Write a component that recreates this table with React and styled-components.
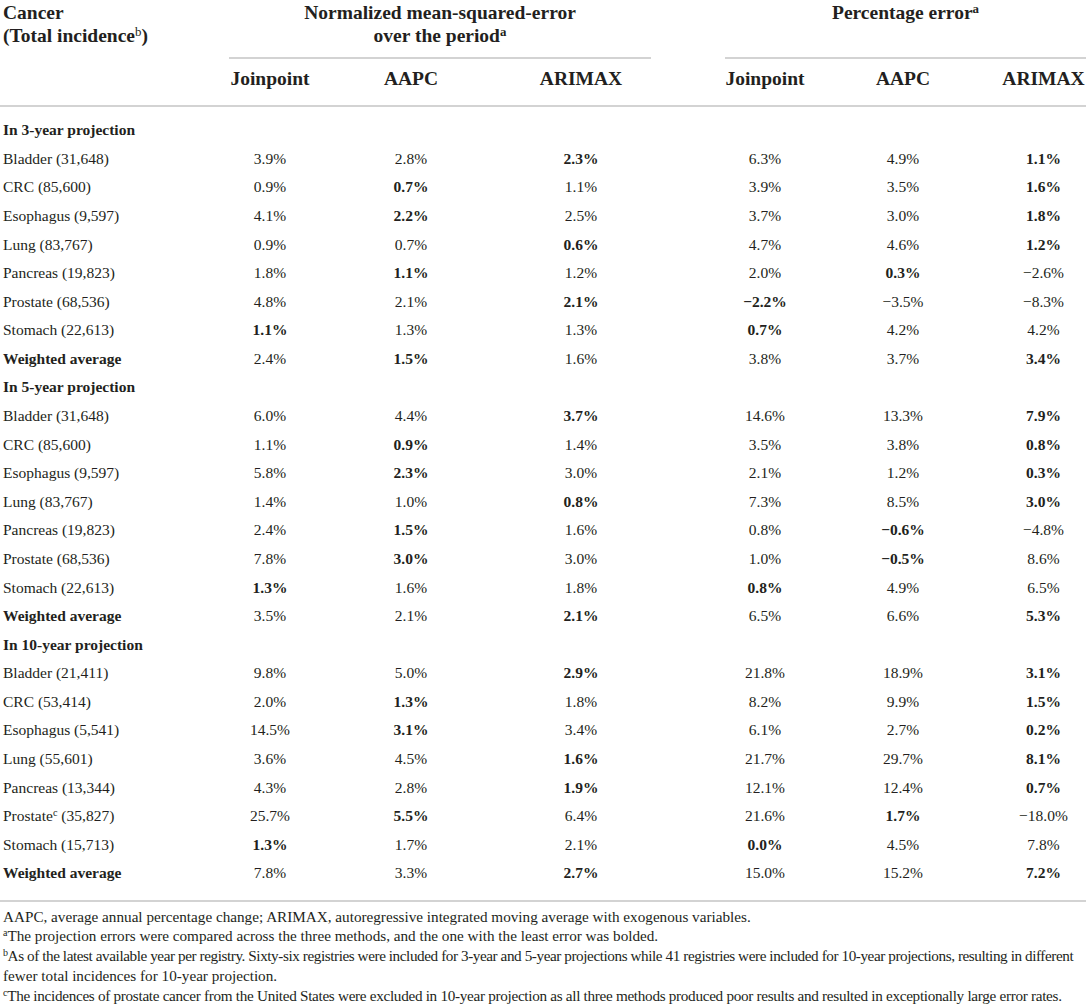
import styled, { createGlobalStyle } from 'styled-components';

const COLS = '229px 82px 200px 140px 74px 80px 196px 85px';
const RULE = '2px solid #d3d3d3';

const GlobalStyle = createGlobalStyle`
  html, body {
    margin: 0;
    padding: 0;
    background: #ffffff;
  }
  body {
    font-family: "Liberation Serif", "Times New Roman", serif;
    color: #231f20;
  }
`;

const Wrap = styled.div`
  width: 1086px;
`;

const Head = styled.div`
  display: grid;
  grid-template-columns: ${COLS};
  grid-template-rows: 59px 48px;
  font-weight: 700;
  font-size: 19.5px;
`;

const CornerCell = styled.div`
  grid-column: 1;
  grid-row: 1 / span 2;
  border-bottom: ${RULE};
  line-height: 23px;
  padding: 1px 0 0 3px;
`;

const GroupCell = styled.div`
  grid-row: 1;
  grid-column: ${({ $start }) => $start} / span 3;
  border-bottom: ${RULE};
  text-align: center;
  line-height: 23px;
  padding-top: 1px;
`;

const ColHead = styled.div`
  grid-row: 2;
  display: flex;
  align-items: center;
  justify-content: center;
  padding-bottom: 6px;
  border-bottom: ${RULE};
  white-space: nowrap;
`;

const Sup = styled.sup`
  font-size: 0.66em;
  line-height: 0;
  vertical-align: 0.5em;
  font-weight: ${({ $bold }) => ($bold ? 700 : 400)};
`;

const Body = styled.div`
  padding: 9px 0 12px;
  border-bottom: ${RULE};
`;

const Row = styled.div`
  display: grid;
  grid-template-columns: ${COLS};
  height: 28.58px;
  align-items: center;
  font-size: 15.5px;
`;

const Label = styled.div`
  padding-left: 3px;
  white-space: nowrap;
  font-weight: ${({ $bold }) => ($bold ? 700 : 400)};
`;

const Value = styled.div`
  text-align: center;
  white-space: nowrap;
  font-weight: ${({ $bold }) => ($bold ? 700 : 400)};
`;

const Notes = styled.div`
  padding: 5px 0 0 3px;
  font-size: 15.2px;
  line-height: 19.75px;
`;

const Note = styled.div`
  white-space: nowrap;
  letter-spacing: ${({ $spacing = 0 }) => $spacing}px;
`;

const sections = [
  {
    title: 'In 3-year projection',
    rows: [
      ['Bladder (31,648)', '3.9%', '2.8%', '*2.3%', '6.3%', '4.9%', '*1.1%'],
      ['CRC (85,600)', '0.9%', '*0.7%', '1.1%', '3.9%', '3.5%', '*1.6%'],
      ['Esophagus (9,597)', '4.1%', '*2.2%', '2.5%', '3.7%', '3.0%', '*1.8%'],
      ['Lung (83,767)', '0.9%', '0.7%', '*0.6%', '4.7%', '4.6%', '*1.2%'],
      ['Pancreas (19,823)', '1.8%', '*1.1%', '1.2%', '2.0%', '*0.3%', '\u22122.6%'],
      ['Prostate (68,536)', '4.8%', '2.1%', '*2.1%', '*\u22122.2%', '\u22123.5%', '\u22128.3%'],
      ['Stomach (22,613)', '*1.1%', '1.3%', '1.3%', '*0.7%', '4.2%', '4.2%'],
      ['*Weighted average', '2.4%', '*1.5%', '1.6%', '3.8%', '3.7%', '*3.4%'],
    ],
  },
  {
    title: 'In 5-year projection',
    rows: [
      ['Bladder (31,648)', '6.0%', '4.4%', '*3.7%', '14.6%', '13.3%', '*7.9%'],
      ['CRC (85,600)', '1.1%', '*0.9%', '1.4%', '3.5%', '3.8%', '*0.8%'],
      ['Esophagus (9,597)', '5.8%', '*2.3%', '3.0%', '2.1%', '1.2%', '*0.3%'],
      ['Lung (83,767)', '1.4%', '1.0%', '*0.8%', '7.3%', '8.5%', '*3.0%'],
      ['Pancreas (19,823)', '2.4%', '*1.5%', '1.6%', '0.8%', '*\u22120.6%', '\u22124.8%'],
      ['Prostate (68,536)', '7.8%', '*3.0%', '3.0%', '1.0%', '*\u22120.5%', '8.6%'],
      ['Stomach (22,613)', '*1.3%', '1.6%', '1.8%', '*0.8%', '4.9%', '6.5%'],
      ['*Weighted average', '3.5%', '2.1%', '*2.1%', '6.5%', '6.6%', '*5.3%'],
    ],
  },
  {
    title: 'In 10-year projection',
    rows: [
      ['Bladder (21,411)', '9.8%', '5.0%', '*2.9%', '21.8%', '18.9%', '*3.1%'],
      ['CRC (53,414)', '2.0%', '*1.3%', '1.8%', '8.2%', '9.9%', '*1.5%'],
      ['Esophagus (5,541)', '14.5%', '*3.1%', '3.4%', '6.1%', '2.7%', '*0.2%'],
      ['Lung (55,601)', '3.6%', '4.5%', '*1.6%', '21.7%', '29.7%', '*8.1%'],
      ['Pancreas (13,344)', '4.3%', '2.8%', '*1.9%', '12.1%', '12.4%', '*0.7%'],
      ['Prostate^c (35,827)', '25.7%', '*5.5%', '6.4%', '21.6%', '*1.7%', '\u221218.0%'],
      ['Stomach (15,713)', '*1.3%', '1.7%', '2.1%', '*0.0%', '4.5%', '7.8%'],
      ['*Weighted average', '7.8%', '3.3%', '*2.7%', '15.0%', '15.2%', '*7.2%'],
    ],
  },
];

const parse = (s) => (s.startsWith('*') ? [s.slice(1), true] : [s, false]);

function LabelText({ text }) {
  const [t, bold] = parse(text);
  if (t.includes('^c')) {
    const [a, b] = t.split('^c');
    return (
      <Label $bold={bold}>
        {a}
        <Sup>c</Sup>
        {b}
      </Label>
    );
  }
  return <Label $bold={bold}>{t}</Label>;
}

function DataRow({ cells }) {
  const [label, ...vals] = cells;
  return (
    <Row>
      <LabelText text={label} />
      {vals.slice(0, 3).map((v, i) => {
        const [t, b] = parse(v);
        return <Value key={i} $bold={b}>{t}</Value>;
      })}
      <div />
      {vals.slice(3).map((v, i) => {
        const [t, b] = parse(v);
        return <Value key={i + 3} $bold={b}>{t}</Value>;
      })}
    </Row>
  );
}

export default function App() {
  const methods = ['Joinpoint', 'AAPC', 'ARIMAX'];
  return (
    <Wrap>
      <GlobalStyle />
      <Head>
        <CornerCell>
          Cancer
          <br />
          (Total incidence<Sup>b</Sup>)
        </CornerCell>
        <GroupCell $start={2}>
          Normalized mean-squared-error
          <br />
          over the period<Sup $bold>a</Sup>
        </GroupCell>
        <GroupCell $start={6}>
          Percentage error<Sup $bold>a</Sup>
        </GroupCell>
        {methods.map((m) => (
          <ColHead key={'n' + m}>{m}</ColHead>
        ))}
        <ColHead />
        {methods.map((m) => (
          <ColHead key={'p' + m}>{m}</ColHead>
        ))}
      </Head>
      <Body>
        {sections.map((s) => (
          <div key={s.title}>
            <Row>
              <Label $bold>{s.title}</Label>
            </Row>
            {s.rows.map((r) => (
              <DataRow key={s.title + r[0]} cells={r} />
            ))}
          </div>
        ))}
      </Body>
      <Notes>
        <Note>
          AAPC, average annual percentage change; ARIMAX, autoregressive integrated moving average with exogenous variables.
        </Note>
        <Note>
          <Sup>a</Sup>The projection errors were compared across the three methods, and the one with the least error was bolded.
        </Note>
        <Note $spacing={-0.42}>
          <Sup>b</Sup>As of the latest available year per registry. Sixty-six registries were included for 3-year and 5-year projections while 41 registries were included for 10-year projections, resulting in different
        </Note>
        <Note>fewer total incidences for 10-year projection.</Note>
        <Note $spacing={-0.3}>
          <Sup>c</Sup>The incidences of prostate cancer from the United States were excluded in 10-year projection as all three methods produced poor results and resulted in exceptionally large error rates.
        </Note>
      </Notes>
    </Wrap>
  );
}
